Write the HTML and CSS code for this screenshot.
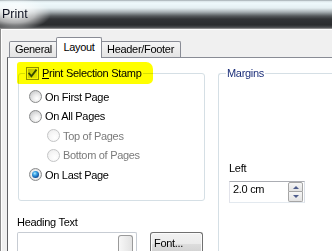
FILE: index.html
```html
<!DOCTYPE html>
<html>
<head>
<meta charset="utf-8">
<link rel="stylesheet" href="styles.css">
</head>
<body>
<div class="titlebar"><span class="title">Print</span></div>
<div class="client">
  <div class="tabs">
    <div class="tab tab-general">General</div>
    <div class="tab tab-layout">Layout</div>
    <div class="tab tab-header">Header/Footer</div>
  </div>
  <div class="panel">
    <div class="left">
      <fieldset class="group stamp">
        <legend class="stamp-legend">
          <span class="legend-inner">
            <span class="checkbox"><svg width="11" height="11" viewBox="0 0 11 11"><path d="M2.2 5.6 L4.4 8.2 L8.9 2.3" fill="none" stroke="#34497a" stroke-width="1.8" stroke-linecap="square"/></svg></span>
            <span class="legend-text"><u>P</u>rint Selection Stamp</span>
          </span>
          <span class="marker"></span>
        </legend>
        <div class="radio-row"><span class="radio"></span>On First Page</div>
        <div class="radio-row tall"><span class="radio"></span>On All Pages</div>
        <div class="radio-row sub"><span class="radio"></span>Top of Pages</div>
        <div class="radio-row sub tall"><span class="radio"></span>Bottom of Pages</div>
        <div class="radio-row checked"><span class="radio"></span>On Last Page</div>
      </fieldset>
      <div class="heading-label">Heading Text</div>
      <div class="heading-row">
        <div class="textbox"><span class="scroll-btn"></span></div>
        <div class="button">Font...</div>
      </div>
    </div>
    <fieldset class="group margins">
      <legend class="margins-legend">Margins</legend>
      <div class="left-label">Left</div>
      <div class="spin">
        <span class="spin-value">2.0 cm</span>
        <div class="spin-buttons">
          <span class="spin-btn up"></span>
          <span class="spin-btn down"></span>
        </div>
      </div>
    </fieldset>
  </div>
</div>
</body>
</html>
```
FILE: styles.css
```css
html, body {
  margin: 0;
  padding: 0;
}
body {
  width: 332px;
  height: 251px;
  overflow: hidden;
  background: #f0f0f0;
  font-family: "Liberation Sans", Arial, sans-serif;
  font-size: 11px;
  letter-spacing: -0.3px;
  color: #000;
}
.titlebar {
  height: 28px;
  background:
    radial-gradient(ellipse 36px 16px at 15px 14px, rgba(255,255,255,0.95) 0, rgba(255,255,255,0.6) 55%, rgba(255,255,255,0) 100%),
    linear-gradient(to bottom, #8d979c 0, #d9e3e7 1px, #eef9fc 3px, #e4eff2 8px, #a7afb3 12px, #55595c 16px, #323437 19px, #2b2d2f 25px, #46484b 27px, #5d5f61 28px);
}
.title {
  display: block;
  padding: 6px 0 0 2px;
  font-size: 12.5px;
  line-height: 16px;
  letter-spacing: 0;
  color: #0d1020;
}
.client {
  width: 331px;
  height: 214px;
  padding-top: 8px;
  border-top: 1px solid #8c8c8c;
  border-left: 1px solid #8c8c8c;
  box-shadow: inset 1px 1px 0 #fff;
  overflow: hidden;
}
.tabs {
  display: flex;
  align-items: flex-end;
  height: 20px;
  margin-left: 8px;
}
.tab {
  box-sizing: border-box;
  height: 16px;
  border: 1px solid #898c95;
  border-bottom: 0;
  border-radius: 2px 2px 0 0;
  background: linear-gradient(#f5f5f5, #e4e4e4);
  text-align: center;
  line-height: 15px;
}
.tab-general { width: 49px; }
.tab-header { width: 81px; }
.tab-layout {
  width: 46px;
  height: 21px;
  margin: 0 -2px -1px;
  padding-top: 2px;
  background: #fff;
  position: relative;
  z-index: 1;
}
.panel {
  margin-left: 6px;
  height: 185px;
  padding: 8px 0 0 10px;
  border-top: 1px solid #898c95;
  border-left: 1px solid #5f6064;
  background: #fff;
  overflow: hidden;
  display: grid;
  grid-template-columns: 187px 1fr;
  column-gap: 13px;
  align-items: start;
}
.group {
  margin: 0;
  min-width: 0;
  border: 1px solid #d5dfe5;
  border-radius: 3px;
}
.stamp {
  padding: 7px 0 16px 10px;
}
.stamp-legend {
  position: relative;
  margin-left: -4px;
  padding: 0 2px 0 1px;
}
.legend-inner {
  display: flex;
  align-items: center;
  height: 14px;
  line-height: 14px;
}
.checkbox {
  box-sizing: border-box;
  width: 13px;
  height: 13px;
  margin-right: 3px;
  border: 1px solid #8e8f8f;
  background: linear-gradient(135deg, #b6babf, #eeeeef);
  box-shadow: inset 0 0 0 1px #f6f6f6;
  display: flex;
  align-items: center;
  justify-content: center;
}
.checkbox svg { display: block; }
.marker {
  position: absolute;
  left: -8px;
  top: -4px;
  width: 136px;
  height: 22px;
  background: #ffff00;
  mix-blend-mode: multiply;
  border-radius: 3px 7px 5px 2px;
}
.radio-row {
  display: flex;
  align-items: center;
  height: 19px;
}
.radio-row.tall { height: 20px; }
.radio {
  position: relative;
  flex: none;
  box-sizing: border-box;
  width: 13px;
  height: 13px;
  margin-right: 3px;
  border-radius: 50%;
  border: 1px solid #8a8b8c;
  background: radial-gradient(circle at 62% 68%, #ffffff 0, #ededed 35%, #cfd0d1 75%, #b9babb 100%);
}
.sub {
  margin-left: 18px;
  color: #7a7a7a;
}
.sub .radio {
  border-color: #c4c5c6;
  background: radial-gradient(circle at 62% 68%, #ffffff 0, #f6f6f6 50%, #e9e9e9 100%);
}
.checked .radio {
  background: radial-gradient(circle at 50% 50%, #ffffff 0, #f3f3f3 50%, #cfd0d1 85%, #b9babb 100%);
}
.checked .radio::after {
  content: "";
  position: absolute;
  left: 2px;
  top: 2px;
  width: 7px;
  height: 7px;
  border-radius: 50%;
  background: radial-gradient(circle at 40% 35%, #b4ebff 0, #3ea6e6 30%, #135aa8 65%, #0b2d66 100%);
}
.heading-label {
  margin: 14px 0 0 -1px;
  line-height: 14px;
}
.heading-row {
  display: flex;
  margin: 3px 0 0 -1px;
}
.textbox {
  box-sizing: border-box;
  width: 120px;
  height: 19px;
  padding: 2px 3px 0 0;
  border: 1px solid #c7ccd3;
  border-bottom: 0;
  border-radius: 2px 2px 0 0;
  background: #fff;
  display: flex;
  justify-content: flex-end;
  align-items: flex-start;
}
.scroll-btn {
  box-sizing: border-box;
  width: 15px;
  height: 16px;
  border: 1px solid #9a9a9a;
  border-bottom: 0;
  border-radius: 3px 3px 0 0;
  background: linear-gradient(to right, #f7f7f7, #e2e2e2);
}
.button {
  box-sizing: border-box;
  width: 53px;
  height: 19px;
  margin-left: 13px;
  padding-left: 3px;
  border: 1px solid #707070;
  border-bottom: 0;
  border-radius: 3px 3px 0 0;
  background: linear-gradient(#f2f2f2 0, #ebebeb 11px, #dddddd 11px, #cfcfcf 22px);
  box-shadow: inset 1px 1px 0 #fbfbfb, inset -1px 0 0 #fbfbfb;
  line-height: 21px;
  overflow: hidden;
}
.margins {
  box-sizing: border-box;
  height: 185px;
  padding: 0 0 0 10px;
  border-right: 0;
  border-bottom: 0;
  border-radius: 3px 0 0 0;
}
.margins-legend {
  margin-left: -3px;
  padding: 0 1px;
  line-height: 14px;
  color: #1c2f7a;
}
.left-label {
  margin-top: 81px;
  line-height: 14px;
}
.spin {
  box-sizing: border-box;
  width: 76px;
  height: 22px;
  margin-top: 6px;
  border: 1px solid;
  border-color: #abadb3 #dbdfe6 #e3e9ef #e2e3ea;
  display: flex;
  justify-content: space-between;
  align-items: flex-start;
}
.spin-value {
  padding-left: 3px;
  line-height: 14px;
}
.spin-buttons {
  display: flex;
  flex-direction: column;
  align-self: stretch;
  margin-right: 1px;
}
.spin-btn {
  box-sizing: border-box;
  width: 15px;
  height: 10px;
  border: 1px solid #a5a5a5;
  background: linear-gradient(#f6f6f6, #e3e3e3);
  display: flex;
  align-items: center;
  justify-content: center;
}
.spin-btn.up { border-radius: 2px 2px 0 0; }
.spin-btn.down { border-top: 0; border-radius: 0 0 2px 2px; }
.spin-btn::after {
  content: "";
  width: 0;
  height: 0;
  border-left: 3px solid transparent;
  border-right: 3px solid transparent;
}
.spin-btn.up::after { border-bottom: 3px solid #4e5d8c; }
.spin-btn.down::after { border-top: 3px solid #4e5d8c; }
```
